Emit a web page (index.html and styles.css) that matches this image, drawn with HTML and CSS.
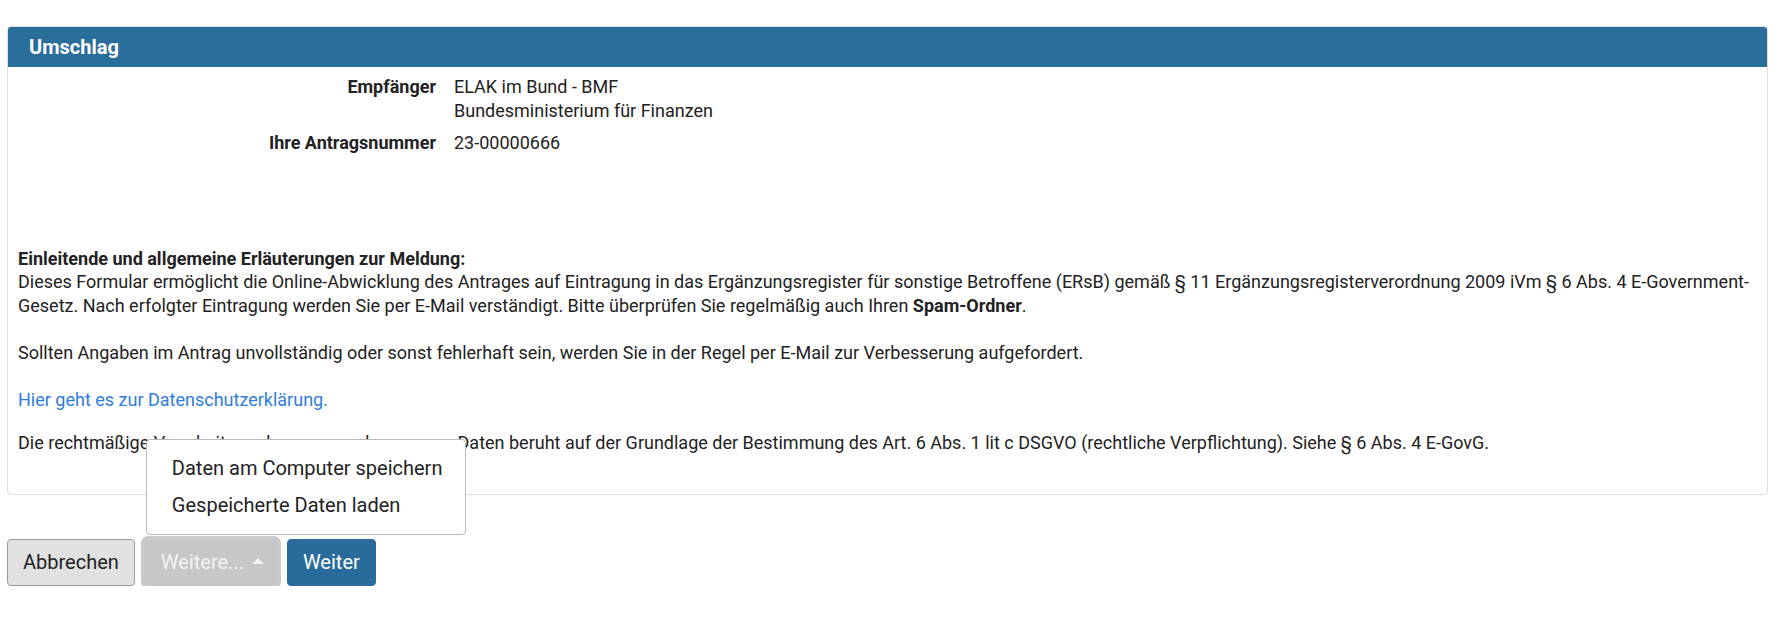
FILE: index.html
```html
<!DOCTYPE html>
<html lang="de">
<head>
<meta charset="utf-8">
<title>Umschlag</title>
<link rel="stylesheet" href="styles.css">
</head>
<body>
<div class="page">
  <section class="card">
    <h2 class="card-header">Umschlag</h2>
    <div class="card-body">
      <dl class="envelope">
        <dt>Empfänger</dt>
        <dd>ELAK im Bund - BMF<br>Bundesministerium für Finanzen</dd>
        <dt>Ihre Antragsnummer</dt>
        <dd>23-00000666</dd>
      </dl>
      <div class="intro">
        <p><strong>Einleitende und allgemeine Erläuterungen zur Meldung:</strong><br>Dieses Formular ermöglicht die Online-Abwicklung des Antrages auf Eintragung in das Ergänzungsregister für sonstige Betroffene (ERsB) gemäß § 11 Ergänzungsregisterverordnung 2009 iVm § 6 Abs. 4 E-Government-Gesetz. Nach erfolgter Eintragung werden Sie per E-Mail verständigt. Bitte überprüfen Sie regelmäßig auch Ihren <strong>Spam-Ordner</strong>.</p>
        <p>Sollten Angaben im Antrag unvollständig oder sonst fehlerhaft sein, werden Sie in der Regel per E-Mail zur Verbesserung aufgefordert.</p>
        <p class="link-par"><a href="#">Hier geht es zur Datenschutzerklärung.</a></p>
        <p>Die rechtmäßige Verarbeitung der personenbezogenen Daten beruht auf der Grundlage der Bestimmung des Art. 6 Abs. 1 lit c DSGVO (rechtliche Verpflichtung). Siehe § 6 Abs. 4 E-GovG.</p>
      </div>
    </div>
  </section>
  <div class="actions">
    <button class="btn btn-default" type="button">Abbrechen</button>
    <div class="dropup">
      <button class="btn btn-more" type="button">Weitere...<span class="caret"></span></button>
      <ul class="dropdown-menu">
        <li><a href="#">Daten am Computer speichern</a></li>
        <li><a href="#">Gespeicherte Daten laden</a></li>
      </ul>
    </div>
    <button class="btn btn-primary" type="button">Weiter</button>
  </div>
</div>
</body>
</html>
```
FILE: styles.css
```css
* { box-sizing: border-box; }

html, body {
  margin: 0;
  padding: 0;
  background: #fff;
}

body {
  font-family: Roboto, "Liberation Sans", Arial, sans-serif;
  font-size: 18px;
  line-height: 23.5px;
  color: #222;
}

.page {
  padding: 26px 18px 0 7px;
}

.card {
  border: 1px solid #dedede;
  border-radius: 4px;
  overflow: hidden;
}

.card-header {
  margin: 0;
  height: 40px;
  line-height: 40px;
  padding: 0 21px;
  background: #2a6e9c;
  color: #fff;
  font-size: 20px;
  font-weight: 700;
}

.card-body {
  padding: 8px 10px 16px;
}

.envelope {
  display: grid;
  grid-template-columns: 418px 1fr;
  column-gap: 18px;
  row-gap: 9px;
  margin: 0;
}

.envelope dt {
  font-weight: 700;
  text-align: right;
}

.envelope dd {
  margin: 0;
}

.intro {
  margin-top: 92px;
}

.intro p {
  margin: 0 0 23.5px;
}

.intro p.link-par {
  margin-bottom: 19.5px;
}

.intro a {
  color: #2f7ddd;
  text-decoration: none;
}

.actions {
  display: flex;
  align-items: flex-start;
  gap: 9px;
  margin-top: 44px;
}

.btn {
  height: 47px;
  padding: 0 15px;
  border: 1px solid #9a9a9a;
  border-radius: 4px;
  font-family: Roboto, "Liberation Sans", Arial, sans-serif;
  font-size: 20px;
  cursor: pointer;
}

.btn-default {
  background: #e1e1e1;
  color: #222;
}

.dropup {
  position: relative;
}

.btn-more {
  background: #c6c7c8;
  border-color: #c6c7c8;
  color: #f4f4f4;
  padding: 0 13px 0 16px;
  box-shadow: 0 0 0 3px #c9cacb;
}

.caret {
  display: inline-block;
  width: 0;
  height: 0;
  margin-left: 8px;
  vertical-align: 5px;
  border-left: 6px solid transparent;
  border-right: 6px solid transparent;
  border-bottom: 6px solid #f4f4f4;
}

.btn-primary {
  background: #296c9b;
  border-color: #296c9b;
  color: #fff;
}

.dropdown-menu {
  position: absolute;
  left: 2px;
  bottom: 51px;
  width: 320px;
  margin: 0;
  padding: 10px 0;
  list-style: none;
  background: #fff;
  border: 1px solid #b9b9b9;
  border-radius: 4px;
}

.dropdown-menu a {
  display: block;
  padding: 0 25px;
  line-height: 37px;
  font-size: 20px;
  color: #222;
  text-decoration: none;
  white-space: nowrap;
}
```
